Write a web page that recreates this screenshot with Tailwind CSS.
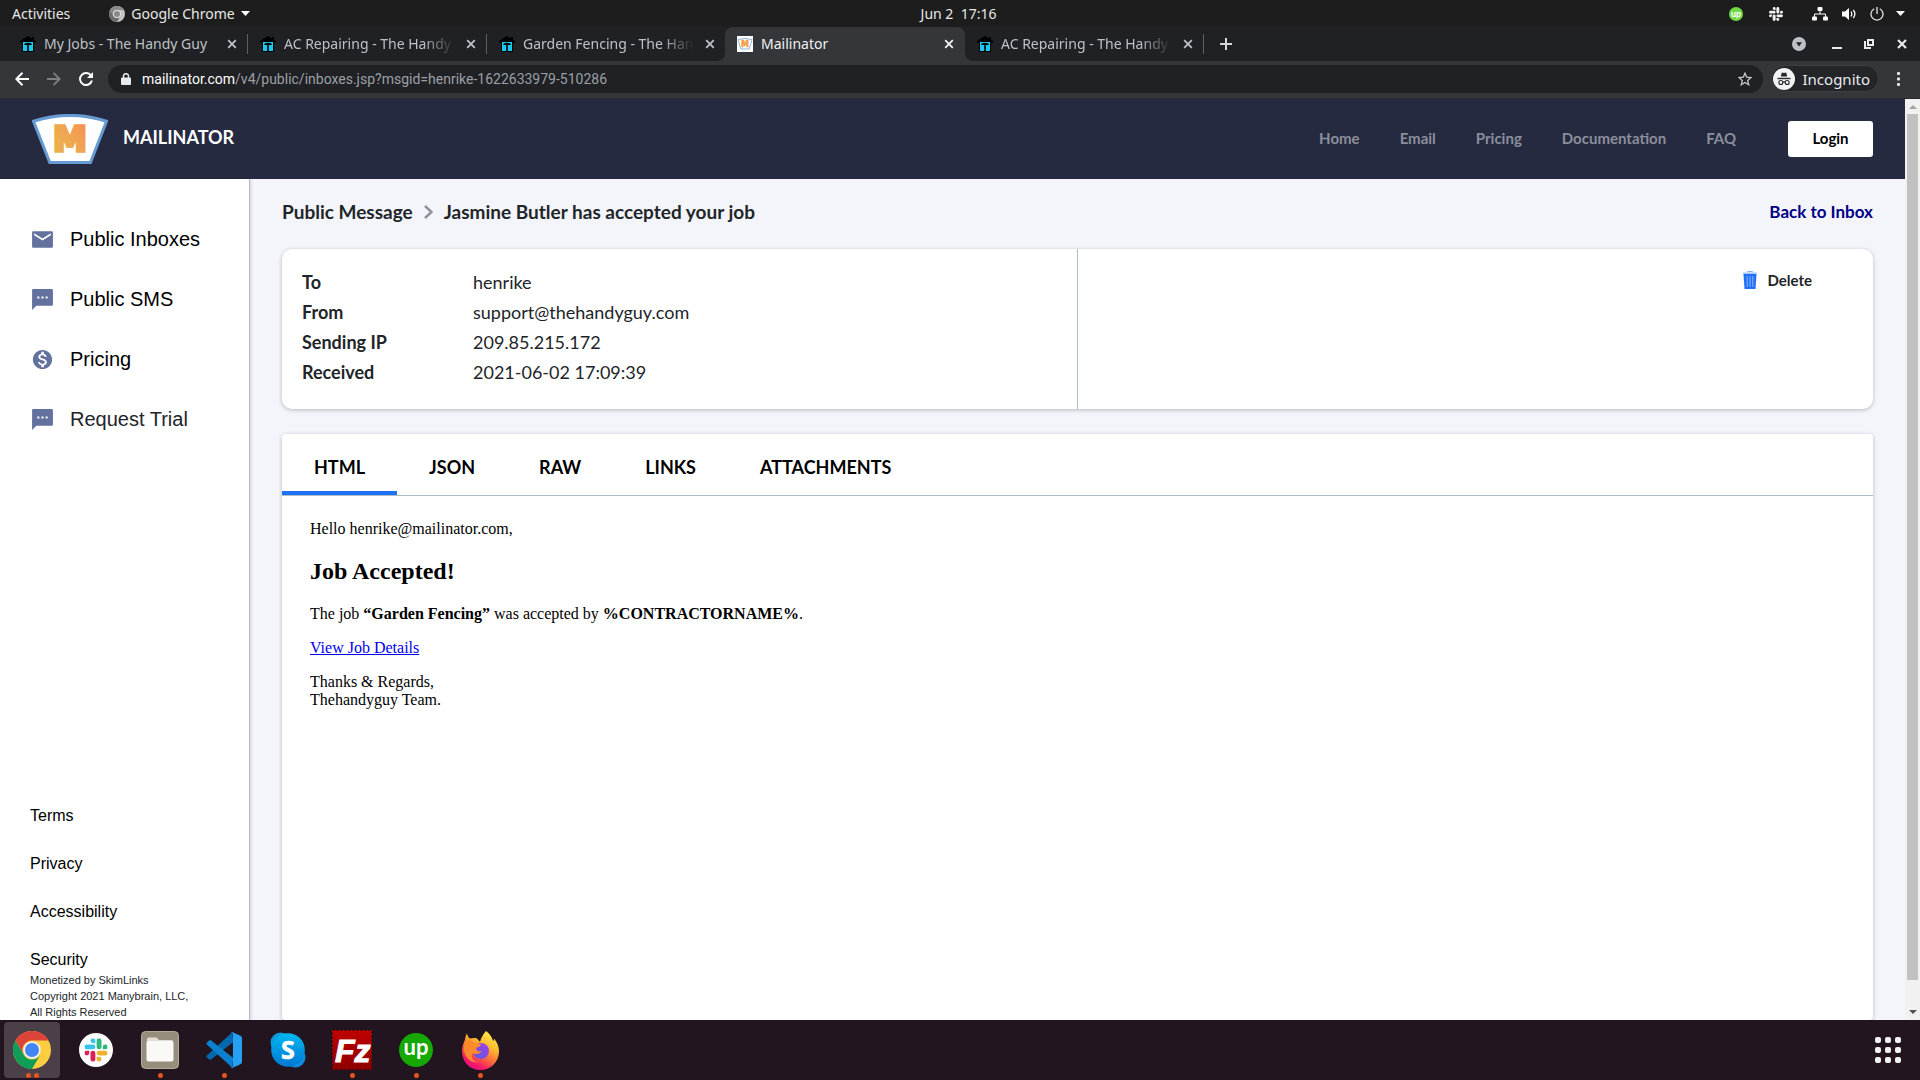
<!DOCTYPE html>
<html lang="en">
<head>
<meta charset="utf-8">
<title>Mailinator</title>
<script src="https://cdn.jsdelivr.net/npm/@tailwindcss/browser@4"></script>
</head>
<body class="flex h-screen flex-col overflow-hidden bg-[#202124] font-['Noto_Sans',sans-serif] text-sm text-[#e8eaed]">

<svg class="hidden" aria-hidden="true">
  <symbol id="house" viewBox="0 0 16 16">
    <path d="M8 0 L0 5 V7 H2 V16 H14 V7 H16 V5 L14 4 V1 H12 V2.6 Z" fill="#000"/>
    <path d="M3 6 H13 V15 H3 Z" fill="#1cc8ee"/>
    <path d="M4 8 Q8 5.500 12 8 L11.500 9 H8.800 V15 H7.200 V9 H5 Z" fill="#000"/>
  </symbol>
  <symbol id="close" viewBox="0 0 16 16">
    <path d="M4.2 4.2 L11.8 11.8 M11.8 4.2 L4.2 11.8" stroke="currentColor" stroke-width="1.8" fill="none"/>
  </symbol>
  <symbol id="slack-a" viewBox="0 0 24 24"><path d="M5.042 15.165a2.528 2.528 0 0 1-2.52 2.523A2.528 2.528 0 0 1 0 15.165a2.527 2.527 0 0 1 2.522-2.52h2.52v2.52zM6.313 15.165a2.527 2.527 0 0 1 2.521-2.52 2.527 2.527 0 0 1 2.521 2.52v6.313A2.528 2.528 0 0 1 8.834 24a2.528 2.528 0 0 1-2.521-2.522v-6.313z"/></symbol>
  <symbol id="slack-b" viewBox="0 0 24 24"><path d="M8.834 5.042a2.528 2.528 0 0 1-2.521-2.52A2.528 2.528 0 0 1 8.834 0a2.528 2.528 0 0 1 2.521 2.522v2.52H8.834zM8.834 6.313a2.528 2.528 0 0 1 2.521 2.521 2.528 2.528 0 0 1-2.521 2.521H2.522A2.528 2.528 0 0 1 0 8.834a2.528 2.528 0 0 1 2.522-2.521h6.312z"/></symbol>
  <symbol id="slack-c" viewBox="0 0 24 24"><path d="M18.956 8.834a2.528 2.528 0 0 1 2.522-2.521A2.528 2.528 0 0 1 24 8.834a2.528 2.528 0 0 1-2.522 2.521h-2.522V8.834zM17.688 8.834a2.528 2.528 0 0 1-2.523 2.521 2.527 2.527 0 0 1-2.52-2.521V2.522A2.527 2.527 0 0 1 15.165 0a2.528 2.528 0 0 1 2.523 2.522v6.312z"/></symbol>
  <symbol id="slack-d" viewBox="0 0 24 24"><path d="M15.165 18.956a2.528 2.528 0 0 1 2.523 2.522A2.528 2.528 0 0 1 15.165 24a2.527 2.527 0 0 1-2.52-2.522v-2.522h2.52zM15.165 17.688a2.527 2.527 0 0 1-2.52-2.523 2.526 2.526 0 0 1 2.52-2.52h6.313A2.527 2.527 0 0 1 24 15.165a2.528 2.528 0 0 1-2.522 2.523h-6.313z"/></symbol>
  <symbol id="sms" viewBox="0 0 24 24"><path d="M20.800 2H3.200c-.66 0-1.190.54-1.190 1.200L2 22l4-4h14.800c.66 0 1.200-.54 1.200-1.200V3.200c0-.66-.54-1.200-1.200-1.200zM9 11H7V9h2v2zm4 0h-2V9h2v2zm4 0h-2V9h2v2z" fill="#62719d"/></symbol>
</svg>

<!-- Desktop top bar -->
<header class="grid h-[27px] shrink-0 grid-cols-3 items-center bg-[#1d1d1d] pr-[15px] pl-3 text-[#e8e8e8]">
  <div class="flex items-center gap-[39px]">
    <button class="leading-5">Activities</button>
    <button class="flex items-center gap-1.5 leading-5">
      <svg class="size-4" viewBox="0 0 48 48"><circle cx="24" cy="24" r="24" fill="#c4c4c4"/><path d="M3.200 12 A24 24 0 0 1 44.800 12 L24 12 A12 12 0 0 0 13.600 30 Z" fill="#8a8a8a"/><path d="M3.200 12 L13.600 30 A12 12 0 0 0 34.400 30 L24 48 A24 24 0 0 1 3.200 12Z" fill="#6d6d6d"/><circle cx="24" cy="24" r="12" fill="#ddd"/><circle cx="24" cy="24" r="9" fill="#888"/></svg>
      <span>Google Chrome</span>
      <svg class="h-[5px] w-[9px]" viewBox="0 0 9 5"><path d="M0 0H9L4.500 5Z" fill="#fff"/></svg>
    </button>
  </div>
  <time class="text-center leading-5 whitespace-pre">Jun 2  17:16</time>
  <div class="flex items-center justify-end">
    <svg class="mr-[26px] size-3.5" viewBox="0 0 14 14"><circle cx="7" cy="7" r="7" fill="#6fda44"/><text x="7" y="9.500" text-anchor="middle" font-family="Inter" font-weight="700" font-size="8" fill="#fff">up</text></svg>
    <svg class="mr-[29px] size-3.5" fill="#f2f2f2" viewBox="0 0 24 24"><use href="#slack-a"/><use href="#slack-b"/><use href="#slack-c"/><use href="#slack-d"/></svg>
    <svg class="mr-3.5 h-3.5 w-4" viewBox="0 0 16 14" fill="#fff"><rect x="5.500" y="0" width="5" height="4" rx="1"/><rect x="0" y="9.500" width="5" height="4" rx="1"/><rect x="11" y="9.500" width="5" height="4" rx="1"/><path d="M8 4V7M2.500 10V7H13.500V10M8 7" stroke="#fff" fill="none"/></svg>
    <svg class="mr-[13px] h-3.5 w-[15px]" viewBox="0 0 15 14" fill="none" stroke="#fff"><path d="M0 4.500H3L7 1V13L3 9.500H0Z" fill="#fff" stroke="none"/><path d="M9 4.500Q10.500 7 9 9.500M11.300 3Q14.500 7 11.300 11" stroke-width="1.300"/></svg>
    <svg class="mr-3 size-3.5" viewBox="0 0 14 14" fill="none" stroke="#e8e8e8" stroke-width="1.300"><path d="M4.200 1.800A6 6 0 1 0 9.800 1.800M7 0V7"/></svg>
    <svg class="h-[5px] w-[9px]" viewBox="0 0 9 5"><path d="M0 0H9L4.500 5Z" fill="#fff"/></svg>
  </div>
</header>

<!-- Tab strip -->
<nav class="flex h-[34px] shrink-0 items-stretch justify-between pl-2 text-[#bdc1c6]" aria-label="Tabs">
  <div class="flex">
    <div class="flex w-[239px] items-center gap-2 pr-[7px] pl-3">
      <svg class="size-4 shrink-0"><use href="#house"/></svg>
      <span class="min-w-0 flex-1 overflow-hidden leading-5 whitespace-nowrap">My Jobs - The Handy Guy</span>
      <button aria-label="Close tab"><svg class="size-4"><use href="#close"/></svg></button>
    </div>
    <div class="h-5 w-px self-center bg-[#5b5e62]"></div>
    <div class="flex w-[238px] items-center gap-2 pr-[7px] pl-3">
      <svg class="size-4 shrink-0"><use href="#house"/></svg>
      <span class="min-w-0 flex-1 overflow-hidden leading-5 whitespace-nowrap [mask-image:linear-gradient(to_left,transparent,black_32px)]">AC Repairing - The Handy Guy</span>
      <button aria-label="Close tab"><svg class="size-4"><use href="#close"/></svg></button>
    </div>
    <div class="h-5 w-px self-center bg-[#5b5e62]"></div>
    <div class="flex w-[238px] items-center gap-2 pr-[7px] pl-3">
      <svg class="size-4 shrink-0"><use href="#house"/></svg>
      <span class="min-w-0 flex-1 overflow-hidden leading-5 whitespace-nowrap [mask-image:linear-gradient(to_left,transparent,black_32px)]">Garden Fencing - The Handy Guy</span>
      <button aria-label="Close tab"><svg class="size-4"><use href="#close"/></svg></button>
    </div>
    <div class="relative flex w-[240px] items-center gap-2 rounded-t-lg bg-[#35363a] pr-2 pl-3 text-[#f1f3f4]">
      <svg class="absolute bottom-0 -left-2 size-2" viewBox="0 0 8 8"><path d="M8 0V8H0A8 8 0 0 0 8 0Z" fill="#35363a"/></svg>
      <svg class="absolute -right-2 bottom-0 size-2" viewBox="0 0 8 8"><path d="M0 0V8H8A8 8 0 0 1 0 0Z" fill="#35363a"/></svg>
      <svg class="size-4 shrink-0" viewBox="0 0 16 16"><rect width="16" height="16" fill="#fff"/><path d="M1 3.500Q8 1.500 15 3.500L12.200 13H3.800Z" fill="#fff" stroke="#8fb5e0" stroke-width="1"/><text x="8" y="10.500" text-anchor="middle" font-family="DejaVu Sans" font-weight="700" font-size="8" fill="#f2a03d" stroke="#f2a03d" stroke-width=".5">M</text></svg>
      <span class="min-w-0 flex-1 overflow-hidden leading-5 whitespace-nowrap">Mailinator</span>
      <button aria-label="Close tab"><svg class="size-4"><use href="#close"/></svg></button>
    </div>
    <div class="flex w-[238px] items-center gap-2 pr-[7px] pl-3">
      <svg class="size-4 shrink-0"><use href="#house"/></svg>
      <span class="min-w-0 flex-1 overflow-hidden leading-5 whitespace-nowrap [mask-image:linear-gradient(to_left,transparent,black_32px)]">AC Repairing - The Handy Guy</span>
      <button aria-label="Close tab"><svg class="size-4"><use href="#close"/></svg></button>
    </div>
    <div class="h-5 w-px self-center bg-[#5b5e62]"></div>
    <button class="ml-4 self-center" aria-label="New tab"><svg class="size-3" viewBox="0 0 12 12"><path d="M6 0V12M0 6H12" stroke="#d5d7da" stroke-width="2"/></svg></button>
  </div>
  <div class="flex items-center pr-3 text-[#e8eaed]">
    <button class="mr-[26px]" aria-label="Search tabs"><svg class="size-3.5" viewBox="0 0 14 14"><circle cx="7" cy="7" r="7" fill="#bdc1c6"/><path d="M4 5.200H10L7 9.500Z" fill="#202124"/></svg></button>
    <button class="mr-[22px] pt-2" aria-label="Minimize"><svg class="h-0.5 w-2.5" viewBox="0 0 10 2"><rect width="10" height="2" fill="currentColor"/></svg></button>
    <button class="mr-[22px]" aria-label="Restore"><svg class="size-2.5" viewBox="0 0 10 10" fill="none" stroke="currentColor" stroke-width="2"><path d="M4 1H9V6H4Z"/><path d="M1 2V9H7"/></svg></button>
    <button aria-label="Close window"><svg class="size-3" viewBox="0 0 12 12"><path d="M2 2L10 10M10 2L2 10" stroke="currentColor" stroke-width="2.200"/></svg></button>
  </div>
</nav>

<!-- Toolbar -->
<div class="flex h-[38px] shrink-0 items-center border-b border-[#2a2a2b] bg-[#35363a] pr-5 pb-0.5 pl-[15px]">
  <button class="mr-[18px]" aria-label="Back"><svg class="size-3.5" viewBox="0 0 14 14" fill="none" stroke="#fff" stroke-width="2"><path d="M14 7H1.500M7.500 .8L1.300 7L7.500 13.200"/></svg></button>
  <button class="mr-[18px]" aria-label="Forward"><svg class="size-3.5" viewBox="0 0 14 14" fill="none" stroke="#7d7f83" stroke-width="1.800"><path d="M0 7H12.500M6.500 .8L12.700 7L6.500 13.200"/></svg></button>
  <button class="mr-[15px]" aria-label="Reload"><svg class="size-3.5" viewBox="0 0 14 14"><path d="M12 3.600A6 6 0 1 0 12.900 8.500" fill="none" stroke="#fff" stroke-width="2"/><path d="M14 0V6H8Z" fill="#fff"/></svg></button>
  <div class="flex h-7 flex-1 items-center rounded-full bg-[#202124] pr-[11px] pl-[13px]">
    <svg class="mr-[11px] h-3 w-2.5" viewBox="0 0 10 12"><rect y="4.500" width="10" height="7.500" rx="1" fill="#e8eaed"/><path d="M2.500 5V3A2.500 2.300 0 0 1 7.500 3V5" fill="none" stroke="#e8eaed" stroke-width="1.500"/></svg>
    <p class="flex-1 font-[Roboto,sans-serif] leading-5 text-[#9aa0a6]"><span class="text-white">mailinator.com</span>/v4/public/inboxes.jsp?msgid=henrike-1622633979-510286</p>
    <button aria-label="Bookmark this page"><svg class="size-3.5" viewBox="0 0 14 14"><path d="M7 1.200L8.700 5.200L13 5.600L9.700 8.400L10.700 12.700L7 10.400L3.300 12.700L4.300 8.400L1 5.600L5.300 5.200Z" fill="none" stroke="#c8cacd" stroke-width="1.300"/></svg></button>
  </div>
  <button class="mr-[18px] ml-2 flex h-[27px] items-center gap-2 rounded-full border border-[#3f4043] bg-[#242528] pr-2 pl-px text-[15px] leading-5">
    <svg class="size-[22px]" viewBox="0 0 22 22"><circle cx="11" cy="11" r="11" fill="#f1f3f4"/><path d="M7.800 8.500L8.800 4.500Q11 5.300 13.200 4.500L14.200 8.500Z" fill="#26272a"/><path d="M4.500 10.500H17.500" stroke="#26272a" stroke-width="1.400"/><g fill="none" stroke="#26272a" stroke-width="1.100"><circle cx="7.800" cy="14.500" r="2"/><circle cx="14.200" cy="14.500" r="2"/><path d="M9.800 14.200Q11 13.600 12.200 14.200"/></g></svg>
    <span>Incognito</span>
  </button>
  <button aria-label="Menu"><svg class="h-3.5 w-[3px]" viewBox="0 0 3 14" fill="#e8eaed"><rect width="3" height="3" rx="1"/><rect y="5.500" width="3" height="3" rx="1"/><rect y="11" width="3" height="3" rx="1"/></svg></button>
</div>

<!-- Page viewport -->
<div class="flex min-h-0 flex-1 text-[#212529]">
  <div class="flex min-w-0 flex-1 flex-col">
    <div class="flex h-20 shrink-0 items-center justify-between bg-[#252a41] pr-8 pl-8 font-[Lato,sans-serif]">
      <a href="#" class="flex items-center gap-[15px] text-lg leading-6 font-bold text-white">
        <svg class="h-[50px] w-[76px]" viewBox="0 0 76 50">
          <defs><linearGradient id="m" x1="0" y1="1" x2="1" y2="0"><stop offset="0" stop-color="#e8b64c"/><stop offset=".5" stop-color="#efa750"/><stop offset="1" stop-color="#fa8e52"/></linearGradient></defs>
          <path d="M1.500 7.200Q38 -4.400 74.500 7.200L58.500 48.500H17.800Z" fill="#fff" stroke="#669cd3" stroke-width="3"/>
          <text x="38" y="37" text-anchor="middle" font-family="DejaVu Sans" font-weight="700" font-size="34" fill="url(#m)" stroke="url(#m)" stroke-width="3.500">M</text>
        </svg>
        <span class="pb-1">MAILINATOR</span>
      </a>
      <nav class="flex items-center gap-10 text-[15px] leading-5 font-bold text-[#8b8e9b]">
        <a href="#" class="pb-0.5">Home</a>
        <a href="#" class="pb-0.5">Email</a>
        <a href="#" class="pb-0.5">Pricing</a>
        <a href="#" class="pb-0.5">Documentation</a>
        <a href="#" class="pb-0.5">FAQ</a>
        <button class="ml-3 h-9 w-[85px] rounded-[3px] bg-white pb-0.5 text-black">Login</button>
      </nav>
    </div>

    <div class="flex min-h-0 flex-1">
      <aside class="z-10 flex w-[250px] shrink-0 flex-col border-r border-[#b3bbc3] bg-white pt-[30px] font-['Liberation_Sans',Arial,sans-serif] text-black shadow-[1px_0_3px_rgba(0,0,0,0.15)]">
        <nav class="flex flex-col pl-[30px] text-xl leading-6">
          <a href="#" class="flex h-[60px] items-center gap-[15px]"><svg class="size-[25px]" viewBox="0 0 24 24"><path d="M20.800 4H3.200C2.540 4 2 4.540 2 5.200V18.800c0 .66.54 1.200 1.200 1.200h17.600c.66 0 1.200-.54 1.200-1.200V5.200c0-.66-.54-1.200-1.200-1.200zM20 8l-8 5-8-5V6l8 5 8-5v2z" fill="#62719d"/></svg>Public Inboxes</a>
          <a href="#" class="flex h-[60px] items-center gap-[15px]"><svg class="size-[25px]"><use href="#sms"/></svg>Public SMS</a>
          <a href="#" class="flex h-[60px] items-center gap-[15px]"><svg class="size-[25px]" viewBox="-1 -1 26 26"><path d="M12 2C6.480 2 2 6.480 2 12s4.480 10 10 10 10-4.480 10-10S17.520 2 12 2zm1.410 16.090V20h-2.670v-1.930c-1.710-.36-3.160-1.460-3.270-3.400h1.960c.1 1.050.82 1.870 2.650 1.870 1.960 0 2.400-.98 2.400-1.590 0-.83-.44-1.610-2.670-2.140-2.480-.6-4.180-1.620-4.180-3.670 0-1.720 1.390-2.840 3.110-3.210V4h2.670v1.950c1.860.45 2.790 1.860 2.850 3.390H14.300c-.05-1.110-.64-1.870-2.220-1.870-1.500 0-2.400.68-2.400 1.640 0 .84.65 1.390 2.670 1.910s4.180 1.390 4.180 3.910c-.01 1.830-1.380 2.830-3.120 3.160z" fill="#62719d"/></svg>Pricing</a>
          <a href="#" class="flex h-[60px] items-center gap-[15px] text-[#212529]"><svg class="size-[25px]"><use href="#sms"/></svg>Request Trial</a>
        </nav>
        <div class="mt-auto pl-[30px]">
          <nav class="flex flex-col gap-6 text-base leading-6">
            <a href="#">Terms</a>
            <a href="#">Privacy</a>
            <a href="#">Accessibility</a>
            <a href="#">Security</a>
          </nav>
          <p class="text-[11px] leading-4 text-[#212529]">Monetized by SkimLinks<br>Copyright 2021 Manybrain, LLC,<br>All Rights Reserved</p>
        </div>
      </aside>

      <main class="flex min-w-0 flex-1 flex-col bg-[#f4f5fa] px-8 pt-5">
        <div class="mb-6 flex h-[26px] shrink-0 items-center justify-between font-[Lato,sans-serif] font-bold">
          <h1 class="flex items-center gap-[11px] text-[19px] leading-6">
            <span>Public Message</span>
            <svg class="h-3.5 w-[9px]" viewBox="0 0 9 14"><path d="M1 1L7.500 7L1 13" fill="none" stroke="#8f909c" stroke-width="2.400"/></svg>
            <span>Jasmine Butler has accepted your job</span>
          </h1>
          <a href="#" class="text-[17px] leading-6 text-[#000087]">Back to Inbox</a>
        </div>

        <section class="mb-[25px] flex h-40 shrink-0 rounded-[10px] bg-white font-[Lato,sans-serif] shadow-[0_1px_4px_rgba(0,0,0,0.25)]">
          <dl class="grid w-1/2 grid-cols-[171px_1fr] content-start border-r border-[#b0bec5] px-5 pt-[18px] text-lg leading-[30px]">
            <dt class="font-bold">To</dt><dd>henrike</dd>
            <dt class="font-bold">From</dt><dd>support@thehandyguy.com</dd>
            <dt class="font-bold">Sending IP</dt><dd>209.85.215.172</dd>
            <dt class="font-bold">Received</dt><dd>2021-06-02 17:09:39</dd>
          </dl>
          <div class="flex flex-1 items-start justify-end pt-[22px] pr-[61px]">
            <button class="flex items-center gap-2.5 text-[15px] leading-[18px] font-bold">
              <svg class="h-[18px] w-3.5" viewBox="0 0 14 18"><path d="M4.500 1.500V.5H9.500V1.500" fill="none" stroke="#7eaef8"/><path d="M0 1.500H14V3H0Z" fill="#a9c9fb"/><path d="M.5 3H13.500L12.500 18H1.500Z" fill="#1f71f8"/><path d="M4.200 5V16M7 5V16M9.800 5V16" stroke="#8db7fc"/></svg>
              Delete
            </button>
          </div>
        </section>

        <section class="flex min-h-0 flex-1 flex-col rounded bg-white shadow-[0_1px_4px_rgba(0,0,0,0.25)]">
          <div role="tablist" class="flex shrink-0 border-b border-[#b0bec5] font-[Lato,sans-serif] text-lg leading-6 font-bold text-black">
            <button role="tab" aria-selected="true" class="h-[61px] border-b-4 border-[#1f71f8] px-8 pt-2">HTML</button>
            <button role="tab" class="h-[61px] border-b-4 border-transparent px-8 pt-2">JSON</button>
            <button role="tab" class="h-[61px] border-b-4 border-transparent px-8 pt-2">RAW</button>
            <button role="tab" class="h-[61px] border-b-4 border-transparent px-8 pt-2">LINKS</button>
            <button role="tab" class="h-[61px] border-b-4 border-transparent px-8 pt-2">ATTACHMENTS</button>
          </div>
          <article class="px-7 pt-6 font-['Liberation_Serif','Times_New_Roman',serif] text-base leading-[18px] text-black">
            <p>Hello henrike@mailinator.com,</p>
            <h2 class="my-5 text-2xl leading-[27px] font-bold">Job Accepted!</h2>
            <p>The job <b>“Garden Fencing”</b> was accepted by <b>%CONTRACTORNAME%</b>.</p>
            <p class="my-4"><a href="#" class="text-[#0000ee] underline">View Job Details</a></p>
            <p>Thanks &amp; Regards,<br>Thehandyguy Team.</p>
          </article>
        </section>
      </main>
    </div>
  </div>

  <!-- Scrollbar -->
  <div class="flex w-[15px] shrink-0 flex-col items-center bg-[#f1f1f1]">
    <svg class="h-[15px] w-2.5 shrink-0" viewBox="0 0 10 15"><path d="M1 10H9L5 6Z" fill="#a3a3a3"/></svg>
    <div class="w-[11px] flex-1 bg-[#c1c1c1]"></div>
    <div class="h-[25px] shrink-0"></div>
    <svg class="h-[15px] w-2.5 shrink-0" viewBox="0 0 10 15"><path d="M1 5H9L5 9Z" fill="#505050"/></svg>
  </div>
</div>

<!-- Dock -->
<footer class="flex h-[60px] shrink-0 items-center justify-between bg-[#22151f] pr-[19px] pl-1">
  <div class="flex gap-2">
    <button class="relative flex size-14 items-center justify-center rounded bg-[#4b4048]" aria-label="Google Chrome">
      <svg class="size-[38px]" viewBox="0 0 48 48"><circle cx="24" cy="24" r="24" fill="#ffcd40"/><path d="M3.200 12 A24 24 0 0 1 44.800 12 L24 12 A12 12 0 0 0 13.600 30 Z" fill="#db4437"/><path d="M3.200 12 L13.600 30 A12 12 0 0 0 34.400 30 L24 48 A24 24 0 0 1 3.200 12Z" fill="#0f9d58"/><circle cx="24" cy="24" r="11" fill="#f1f1f1"/><circle cx="24" cy="24" r="8.800" fill="#4285f4"/></svg>
      <span class="absolute inset-x-0 bottom-0 flex justify-center gap-[3px]"><i class="size-[5px] rounded-full bg-[#e95420]"></i><i class="size-[5px] rounded-full bg-[#e95420]"></i></span>
    </button>
    <button class="relative flex size-14 items-center justify-center" aria-label="Slack">
      <svg class="size-[34px]" viewBox="-5.500 -5.500 35 35"><circle cx="12" cy="12" r="17.500" fill="#fff"/><use href="#slack-a" width="24" height="24" fill="#e01e5a"/><use href="#slack-b" width="24" height="24" fill="#36c5f0"/><use href="#slack-c" width="24" height="24" fill="#2eb67d"/><use href="#slack-d" width="24" height="24" fill="#ecb22e"/></svg>
    </button>
    <button class="relative flex size-14 items-center justify-center" aria-label="Files">
      <svg class="size-[38px]" viewBox="0 0 38 38"><rect x=".5" y=".5" width="37" height="37" rx="4" fill="#968e7c" stroke="#b3ac9b"/><path d="M6 8Q6 6.500 7.500 6.500H15.500L18 9H30.500Q32 9 32 10.500V20H6Z" fill="#e2dcd3"/><rect x="5.500" y="10" width="27" height="20.500" rx="2" fill="#faf9f8"/></svg>
      <i class="absolute bottom-0 size-[5px] rounded-full bg-[#e95420]"></i>
    </button>
    <button class="relative flex size-14 items-center justify-center" aria-label="Visual Studio Code">
      <svg class="size-9" viewBox="0 0 35 35"><path d="M25.500 .3L.8 22.800a1.200 1.200 0 0 0 0 1.800L3 26.700a1.500 1.500 0 0 0 2 0L26.500 9.800Z" fill="#0069ae"/><path d="M25.500 34.700L.8 12.200a1.200 1.200 0 0 1 0-1.800L3 8.300a1.500 1.500 0 0 1 2 0L26.500 25.200Z" fill="#0a80ce"/><path d="M26 .2L33.500 3.600Q35 4.400 35 6V29Q35 30.600 33.500 31.400L26 34.800Q24.800 35 24 34.200Q26.200 34.500 26.200 32V3Q26.200 .5 24 .8Q24.800 0 26 .2Z" fill="#25a0f2"/></svg>
      <i class="absolute bottom-0 size-[5px] rounded-full bg-[#e95420]"></i>
    </button>
    <button class="relative flex size-14 items-center justify-center" aria-label="Skype">
      <svg class="size-9" viewBox="0 0 36 36"><defs><linearGradient id="s" x1="0" y1="0" x2="0" y2="1"><stop offset="0" stop-color="#00b7f0"/><stop offset="1" stop-color="#0078d4"/></linearGradient></defs><circle cx="10.500" cy="10.500" r="10" fill="#0d9bd8"/><circle cx="25.500" cy="25.500" r="10" fill="#0d8be0"/><circle cx="18" cy="18" r="16.800" fill="url(#s)"/><text x="18" y="27" text-anchor="middle" font-family="Open Sans" font-weight="700" font-size="25" fill="#fff" stroke="#fff" stroke-width=".6">S</text></svg>
    </button>
    <button class="relative flex size-14 items-center justify-center" aria-label="FileZilla">
      <svg class="size-10" viewBox="0 0 40 40"><defs><linearGradient id="f" x1="0" y1="0" x2="0" y2="1"><stop offset="0" stop-color="#c00000"/><stop offset="1" stop-color="#8c0000"/></linearGradient></defs><rect width="40" height="40" fill="url(#f)"/><rect x=".5" y=".5" width="39" height="39" fill="none" stroke="#3a0a12" stroke-dasharray="2 2"/><text x="3" y="32" font-family="Liberation Sans" font-weight="700" font-style="italic" font-size="32" fill="#fff" stroke="#fff">Fz</text></svg>
      <i class="absolute bottom-0 size-[5px] rounded-full bg-[#e95420]"></i>
    </button>
    <button class="relative flex size-14 items-center justify-center" aria-label="Upwork">
      <svg class="size-[34px]" viewBox="0 0 34 34"><circle cx="17" cy="17" r="17" fill="#14a800"/><text x="17" y="21.500" text-anchor="middle" font-family="Lato" font-weight="700" font-size="22" fill="#fff">up</text></svg>
      <i class="absolute bottom-0 size-[5px] rounded-full bg-[#e95420]"></i>
    </button>
    <button class="relative flex size-14 items-center justify-center" aria-label="Firefox">
      <svg class="size-[39px]" viewBox="0 0 39 39"><defs><linearGradient id="x" x1=".8" y1="0" x2=".25" y2="1"><stop offset="0" stop-color="#fff44f"/><stop offset=".35" stop-color="#ffb52e"/><stop offset=".6" stop-color="#ff6b3a"/><stop offset=".85" stop-color="#f5156c"/><stop offset="1" stop-color="#e31587"/></linearGradient><linearGradient id="y" x1="1" y1="0" x2="0" y2="1"><stop offset="0" stop-color="#a33be8"/><stop offset="1" stop-color="#5b5fe0"/></linearGradient></defs>
      <path d="M25 0C29 2.500 31 6.500 32 10C33 9.500 33 8.500 33 7.500C36.500 12 38.200 16 38 21C37.500 31.500 29.500 39 19.500 39C9 39 1 31 1 20.500C1 15 2.800 11.500 4 9C4.200 7 4.800 4 6 2.500C6.500 5 7.500 6.500 9 7.500C11 6.800 13.500 6.800 15 7C17 8.500 18 9.500 19 11C20 6.500 22.500 3 25 0Z" fill="url(#x)"/>
      <circle cx="20" cy="20" r="8" fill="url(#y)"/>
      <path d="M4 9C7 9 12 10 14 12C17 12.500 19.500 12.500 20 14C19 16 15.500 16 15 17.500C15.500 20.500 18 21 21 20C19 23 15 24 11.500 22C9 27 13 31 18 31C8 33 3 24 3 17Z" fill="#ff8a2c"/></svg>
      <i class="absolute bottom-0 size-[5px] rounded-full bg-[#e95420]"></i>
    </button>
  </div>
  <button aria-label="Show applications"><svg class="size-[26px]" viewBox="0 0 26 26" fill="#f2f2f2"><rect width="6" height="6" rx="2"/><rect x="10" width="6" height="6" rx="2"/><rect x="20" width="6" height="6" rx="2"/><rect y="10" width="6" height="6" rx="2"/><rect x="10" y="10" width="6" height="6" rx="2"/><rect x="20" y="10" width="6" height="6" rx="2"/><rect y="20" width="6" height="6" rx="2"/><rect x="10" y="20" width="6" height="6" rx="2"/><rect x="20" y="20" width="6" height="6" rx="2"/></svg></button>
</footer>
</body>
</html>
